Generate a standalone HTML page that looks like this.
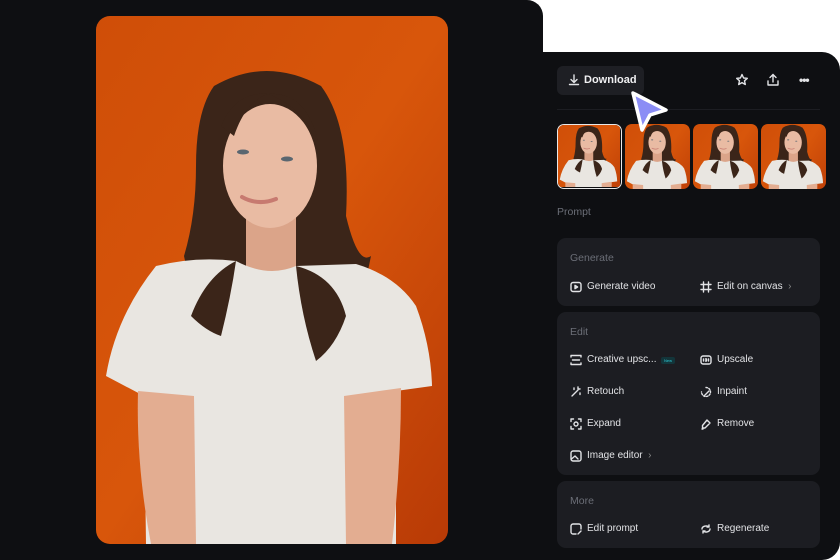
<!DOCTYPE html>
<html><head><meta charset="utf-8"><style>
*{margin:0;padding:0;box-sizing:border-box}
body{width:840px;height:560px;background:#fff;position:relative;overflow:hidden;font-family:"Liberation Sans",sans-serif}
.left{position:absolute;left:0;top:0;width:543px;height:560px;background:#0e0f12;border-top-right-radius:16px}
.photo{position:absolute;left:96px;top:16px;width:352px;height:528px;border-radius:14px;overflow:hidden}
.right{position:absolute;left:543px;top:52px;width:297px;height:508px;background:#0e0f12;border-top-right-radius:18px;border-bottom-right-radius:18px}
.abs{position:absolute}
.btn{left:557px;top:66px;width:87px;height:29px;background:#1e1f24;border-radius:6px;color:#f0f0f2;font-size:11px;font-weight:bold;line-height:29px;padding-left:27px}
.div{left:557px;top:109px;width:263px;height:1px;background:#1c1d22}
.th{top:124px;width:65px;height:65px;border-radius:7px;overflow:hidden}
.card{left:557px;width:263px;background:#1c1d22;border-radius:9px}
.lbl{color:#6b6e77;font-size:10.5px}
.it{color:#e2e3e6;font-size:10px;line-height:12px}
svg.i{position:absolute;width:12px;height:12px;fill:none;stroke:#e2e3e6;stroke-width:1.4;stroke-linecap:round;stroke-linejoin:round}
</style></head><body>
<svg width="0" height="0" style="position:absolute"><defs>
<linearGradient id="bg" x1="0" y1="0" x2="1" y2="1"><stop offset="0" stop-color="#cf4e08"/><stop offset=".5" stop-color="#d8560b"/><stop offset="1" stop-color="#b83a06"/></linearGradient>
<symbol id="pic" viewBox="0 0 352 528">
<rect width="352" height="528" fill="url(#bg)"/>
<path d="M118 70 Q170 40 225 70 Q255 110 250 200 Q262 250 275 240 Q265 290 250 330 Q230 350 200 345 L190 260 L150 260 Q140 300 130 320 Q100 320 82 295 Q95 270 88 240 Q100 200 100 150 Q100 95 118 70Z" fill="#3b2519"/>
<rect x="150" y="190" width="50" height="70" fill="#dba489"/>
<ellipse cx="174" cy="150" rx="47" ry="62" fill="#e9bba3"/>
<path d="M125 110 Q140 75 172 78 Q150 85 138 120Z" fill="#3b2519"/>
<path d="M172 78 Q210 75 222 125 Q205 90 172 78Z" fill="#3b2519"/>
<ellipse cx="147" cy="136" rx="6" ry="2.5" fill="#5a6670"/><ellipse cx="191" cy="143" rx="6" ry="2.5" fill="#5a6670"/>
<path d="M146 181 Q162 190 180 183" stroke="#c77a70" stroke-width="4" fill="none" stroke-linecap="round"/>
<path d="M60 250 Q100 240 140 245 Q172 262 200 250 L260 248 Q300 260 320 290 Q335 330 336 370 L300 375 L300 528 L50 528 L48 380 L10 360 Q20 300 60 250Z" fill="#e9e6e1"/>
<path d="M42 375 L98 380 L100 528 L55 528 Q40 450 42 375Z" fill="#e3ad91"/>
<path d="M248 380 L305 372 Q305 450 296 528 L250 528Z" fill="#e3ad91"/>
<path d="M200 250 Q240 260 250 300 Q240 330 220 345 Q205 300 200 250Z" fill="#3b2519"/>
<path d="M140 245 Q110 260 95 300 Q110 315 125 320 Q135 280 140 245Z" fill="#3b2519"/>
</symbol></defs></svg>

<div class="left"></div>
<div class="photo"><svg width="352" height="528"><use href="#pic" width="352" height="528"/></svg></div>
<div class="right"></div>

<div class="abs btn">Download</div>
<svg class="i" style="left:568px;top:74px;width:12px;height:12px" viewBox="0 0 12 12"><path d="M6 1v7M3 5.5 6 8.5 9 5.5M1.5 10.5h9"/></svg>
<svg class="i" style="left:735px;top:73px;width:14px;height:14px" viewBox="0 0 14 14"><path d="M7 1.5 8.6 5 12.3 5.3 9.5 7.8 10.3 11.5 7 9.6 3.7 11.5 4.5 7.8 1.7 5.3 5.4 5Z"/></svg>
<svg class="i" style="left:766px;top:73px;width:14px;height:14px" viewBox="0 0 14 14"><path d="M7 9V1.5M4 4.5 7 1.5 10 4.5M2 8v4h10V8"/></svg>
<div class="abs" style="left:799px;top:78px;color:#e2e3e6;font-size:12px;letter-spacing:-1px;line-height:4px;font-weight:bold">•••</div>
<div class="abs div"></div>

<div class="abs th" style="left:557px;border:1.5px solid #e8e8e8"><svg width="62" height="62" viewBox="0 50 352 352"><use href="#pic" width="352" height="528"/></svg></div>
<div class="abs th" style="left:625px"><svg width="65" height="65" viewBox="0 50 352 352"><use href="#pic" width="352" height="528"/></svg></div>
<div class="abs th" style="left:693px"><svg width="65" height="65" viewBox="0 50 352 352"><use href="#pic" width="352" height="528"/></svg></div>
<div class="abs th" style="left:761px"><svg width="65" height="65" viewBox="0 50 352 352"><use href="#pic" width="352" height="528"/></svg></div>

<svg class="abs" style="left:626px;top:88px" width="46" height="46" viewBox="0 0 46 46"><path d="M7 5 L40 22 L24 27 L16 42Z" fill="#8b8df5" stroke="#fff" stroke-width="3.5" stroke-linejoin="round"/></svg>

<div class="abs lbl" style="left:557px;top:206px">Prompt</div>

<div class="abs card" style="top:238px;height:68px"></div>
<div class="abs lbl" style="left:570px;top:252px">Generate</div>
<svg class="i" style="left:570px;top:281px" viewBox="0 0 12 12"><rect x="1" y="1.5" width="10" height="9" rx="2"/><path d="M5 4.3v3.4L7.6 6Z" fill="#e2e3e6"/></svg>
<div class="abs it" style="left:587px;top:281px">Generate video</div>
<svg class="i" style="left:700px;top:281px" viewBox="0 0 12 12"><path d="M3.5 1v10M8.5 1v10M1 3.5h10M1 8.5h10"/></svg>
<div class="abs it" style="left:717px;top:281px">Edit on canvas&nbsp;&nbsp;<span style="color:#888">›</span></div>

<div class="abs card" style="top:312px;height:163px"></div>
<div class="abs lbl" style="left:570px;top:326px">Edit</div>
<svg class="i" style="left:570px;top:354px" viewBox="0 0 12 12"><path d="M1 3V1.5h10V3M1 9v1.5h10V9M2.5 6h7"/></svg>
<div class="abs it" style="left:587px;top:354px">Creative upsc...</div>
<div class="abs" style="left:661px;top:357px;width:14px;height:7px;background:#13353a;border-radius:2px;color:#2dc9d6;font-size:4px;line-height:7px;text-align:center">New</div>
<svg class="i" style="left:700px;top:354px" viewBox="0 0 12 12"><rect x="1" y="2" width="10" height="8" rx="2"/><path d="M3.5 5v2M8.5 5v2M5.5 5h1v2h-1"/></svg>
<div class="abs it" style="left:717px;top:354px">Upscale</div>
<svg class="i" style="left:570px;top:386px" viewBox="0 0 12 12"><path d="M2 10 8 4M8 1v2M10 3H8M4 2v1.5M10 7v1.5"/></svg>
<div class="abs it" style="left:587px;top:386px">Retouch</div>
<svg class="i" style="left:700px;top:386px" viewBox="0 0 12 12"><path d="M6 1.5a4.5 4.5 0 1 1-4.5 4.5" stroke-dasharray="1.5 1.5"/><path d="M4 10 9 5"/></svg>
<div class="abs it" style="left:717px;top:386px">Inpaint</div>
<svg class="i" style="left:570px;top:418px" viewBox="0 0 12 12"><path d="M1 3.5V1h2.5M8.5 1H11v2.5M11 8.5V11H8.5M3.5 11H1V8.5"/><circle cx="6" cy="6" r="2"/></svg>
<div class="abs it" style="left:587px;top:418px">Expand</div>
<svg class="i" style="left:700px;top:418px" viewBox="0 0 12 12"><path d="M7 2 10 5 5 10H2.5V7.5ZM2 11h1"/></svg>
<div class="abs it" style="left:717px;top:418px">Remove</div>
<svg class="i" style="left:570px;top:450px" viewBox="0 0 12 12"><rect x="1" y="1" width="10" height="10" rx="2"/><path d="M1.5 9 5 6 8 9" /></svg>
<div class="abs it" style="left:587px;top:450px">Image editor&nbsp;&nbsp;<span style="color:#888">›</span></div>

<div class="abs card" style="top:481px;height:67px"></div>
<div class="abs lbl" style="left:570px;top:495px">More</div>
<svg class="i" style="left:570px;top:523px" viewBox="0 0 12 12"><path d="M11 6V3a2 2 0 0 0-2-2H3a2 2 0 0 0-2 2v6a2 2 0 0 0 2 2h3M8 11l3-3"/></svg>
<div class="abs it" style="left:587px;top:523px">Edit prompt</div>
<svg class="i" style="left:700px;top:523px" viewBox="0 0 12 12"><path d="M2 6a4 3 0 0 1 7-2M10 6a4 3 0 0 1-7 2M9 2v2H7M3 10V8h2"/></svg>
<div class="abs it" style="left:717px;top:523px">Regenerate</div>
</body></html>
